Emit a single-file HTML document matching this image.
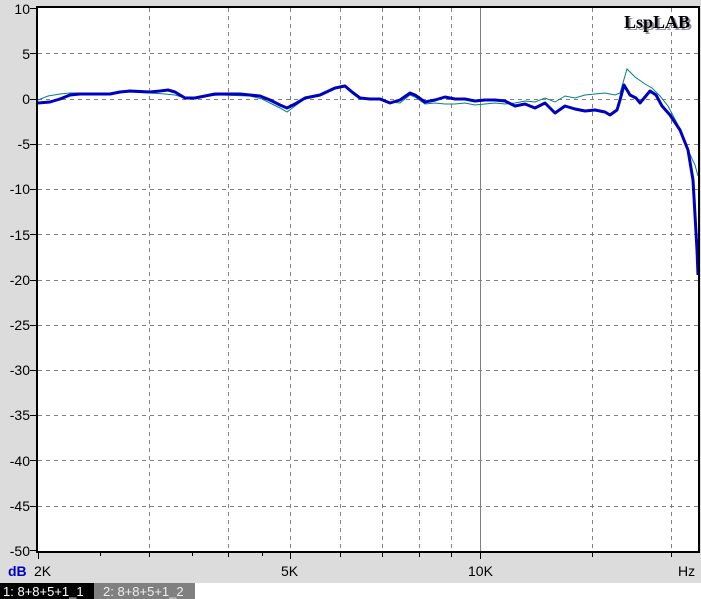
<!DOCTYPE html>
<html><head><style>
body{margin:0;width:701px;height:599px;background:#dcdcdc;position:relative;overflow:hidden;font-family:"Liberation Sans",Arial,sans-serif}
.l{position:absolute;font-size:14px;color:#000}
</style></head><body>
<svg width="701" height="599" style="position:absolute;left:0;top:0" font-family="Liberation Sans, Arial, sans-serif">
<rect x="38" y="8" width="660" height="543" fill="#fff"/>
<g stroke="#808080" stroke-dasharray="4,4" stroke-width="1">
<line x1="38" y1="53.5" x2="698" y2="53.5"/><line x1="38" y1="99.5" x2="698" y2="99.5"/><line x1="38" y1="144.5" x2="698" y2="144.5"/><line x1="38" y1="189.5" x2="698" y2="189.5"/><line x1="38" y1="234.5" x2="698" y2="234.5"/><line x1="38" y1="280.5" x2="698" y2="280.5"/><line x1="38" y1="325.5" x2="698" y2="325.5"/><line x1="38" y1="370.5" x2="698" y2="370.5"/><line x1="38" y1="415.5" x2="698" y2="415.5"/><line x1="38" y1="460.5" x2="698" y2="460.5"/><line x1="38" y1="506.5" x2="698" y2="506.5"/>
<line x1="149.5" y1="8" x2="149.5" y2="551"/><line x1="228.5" y1="8" x2="228.5" y2="551"/><line x1="290.5" y1="8" x2="290.5" y2="551"/><line x1="340.5" y1="8" x2="340.5" y2="551"/><line x1="382.5" y1="8" x2="382.5" y2="551"/><line x1="419.5" y1="8" x2="419.5" y2="551"/><line x1="451.5" y1="8" x2="451.5" y2="551"/><line x1="592.5" y1="8" x2="592.5" y2="551"/><line x1="671.5" y1="8" x2="671.5" y2="551"/>
</g>
<line x1="480.5" y1="8" x2="480.5" y2="551" stroke="#808080"/>
<polyline fill="none" stroke="#008080" stroke-width="1" points="38,100 48,96 60,94 70,93 90,93 110,93 130,92 150,93 165,94 175,95 185,98 195,98 205,96 220,95 250,96 262,99 272,104 280,108 287,112 295,106 305,99 320,96 335,89 345,86 352,91 360,97 370,100 380,100 390,102 400,103 410,95 415,97 425,104 435,103 445,104 455,104 465,103 475,105 485,104 495,103 505,104 515,103 525,101 535,102 545,98 555,102 565,96 575,98 585,95 595,94 605,93 615,95 620,93 627,69 635,77 645,84 652,88 660,96 668,106 678,125 688,150 695,165 698,176"/>
<polyline fill="none" stroke="#0000c0" stroke-width="3" stroke-linejoin="round" points="38,103 50,102 60,99 70,95 80,94 100,94 110,94 120,92 130,91 150,92 160,91 168,90 175,92 185,98 195,98 205,96 215,94 240,94 260,96 270,100 280,105 287,108 295,104 305,98 320,95 335,88 345,86 352,92 360,98 370,99 380,99 390,103 400,100 410,93 415,95 425,102 435,100 445,97 455,99 465,99 475,101 485,100 495,100 505,101 515,106 525,104 535,108 545,103 555,113 565,106 575,109 585,111 595,110 605,112 610,115 617,110 620,100 624,85 630,95 636,98 640,103 645,97 650,91 656,95 662,106 670,115 680,130 688,150 693,180 697,250 698,275"/>
<rect x="37" y="7" width="662" height="545" fill="none" stroke="#000" stroke-width="2"/>
<g stroke="#000" stroke-width="1">
<line x1="30" y1="8.5" x2="37" y2="8.5"/><line x1="30" y1="53.5" x2="37" y2="53.5"/><line x1="30" y1="99.5" x2="37" y2="99.5"/><line x1="30" y1="144.5" x2="37" y2="144.5"/><line x1="30" y1="189.5" x2="37" y2="189.5"/><line x1="30" y1="234.5" x2="37" y2="234.5"/><line x1="30" y1="280.5" x2="37" y2="280.5"/><line x1="30" y1="325.5" x2="37" y2="325.5"/><line x1="30" y1="370.5" x2="37" y2="370.5"/><line x1="30" y1="415.5" x2="37" y2="415.5"/><line x1="30" y1="460.5" x2="37" y2="460.5"/><line x1="30" y1="506.5" x2="37" y2="506.5"/><line x1="30" y1="550.5" x2="37" y2="550.5"/>
<line x1="38.5" y1="552" x2="38.5" y2="559"/><line x1="100.5" y1="552" x2="100.5" y2="556"/><line x1="149.5" y1="552" x2="149.5" y2="557"/><line x1="192.5" y1="552" x2="192.5" y2="556"/><line x1="228.5" y1="552" x2="228.5" y2="557"/><line x1="262.5" y1="552" x2="262.5" y2="556"/><line x1="290.5" y1="552" x2="290.5" y2="559"/><line x1="340.5" y1="552" x2="340.5" y2="557"/><line x1="382.5" y1="552" x2="382.5" y2="557"/><line x1="419.5" y1="552" x2="419.5" y2="557"/><line x1="451.5" y1="552" x2="451.5" y2="557"/><line x1="480.5" y1="552" x2="480.5" y2="559"/><line x1="592.5" y1="552" x2="592.5" y2="557"/><line x1="671.5" y1="552" x2="671.5" y2="557"/>
</g>
<g font-size="14" fill="#000" text-anchor="end">
<text x="30" y="14">10</text><text x="30" y="59">5</text><text x="30" y="104">0</text><text x="30" y="149">-5</text><text x="30" y="194">-10</text><text x="30" y="240">-15</text><text x="30" y="285">-20</text><text x="30" y="330">-25</text><text x="30" y="375">-30</text><text x="30" y="420">-35</text><text x="30" y="466">-40</text><text x="30" y="511">-45</text><text x="30" y="556">-50</text>
</g>
<g font-size="14" fill="#000">
<text x="8" y="576" fill="#0000c0" font-weight="bold">dB</text>
<text x="34" y="576">2K</text><text x="281" y="576">5K</text><text x="468" y="576">10K</text><text x="678" y="576">Hz</text>
</g>
<text x="692" y="30" text-anchor="end" font-family="Liberation Serif, serif" font-weight="bold" font-size="18" fill="#9090a0">LspLAB</text>
<text x="690" y="28" text-anchor="end" font-family="Liberation Serif, serif" font-weight="bold" font-size="18" fill="#000">LspLAB</text>
<rect x="0" y="583" width="701" height="16" fill="#fff"/>
<rect x="0" y="583" width="94" height="16" fill="#000"/>
<rect x="94" y="583" width="101" height="16" fill="#808080"/>
<text x="3" y="596" font-size="13" fill="#fff">1: 8+8+5+1_1</text>
<text x="103" y="596" font-size="13" fill="#eee">2: 8+8+5+1_2</text>
</svg>
</body></html>
